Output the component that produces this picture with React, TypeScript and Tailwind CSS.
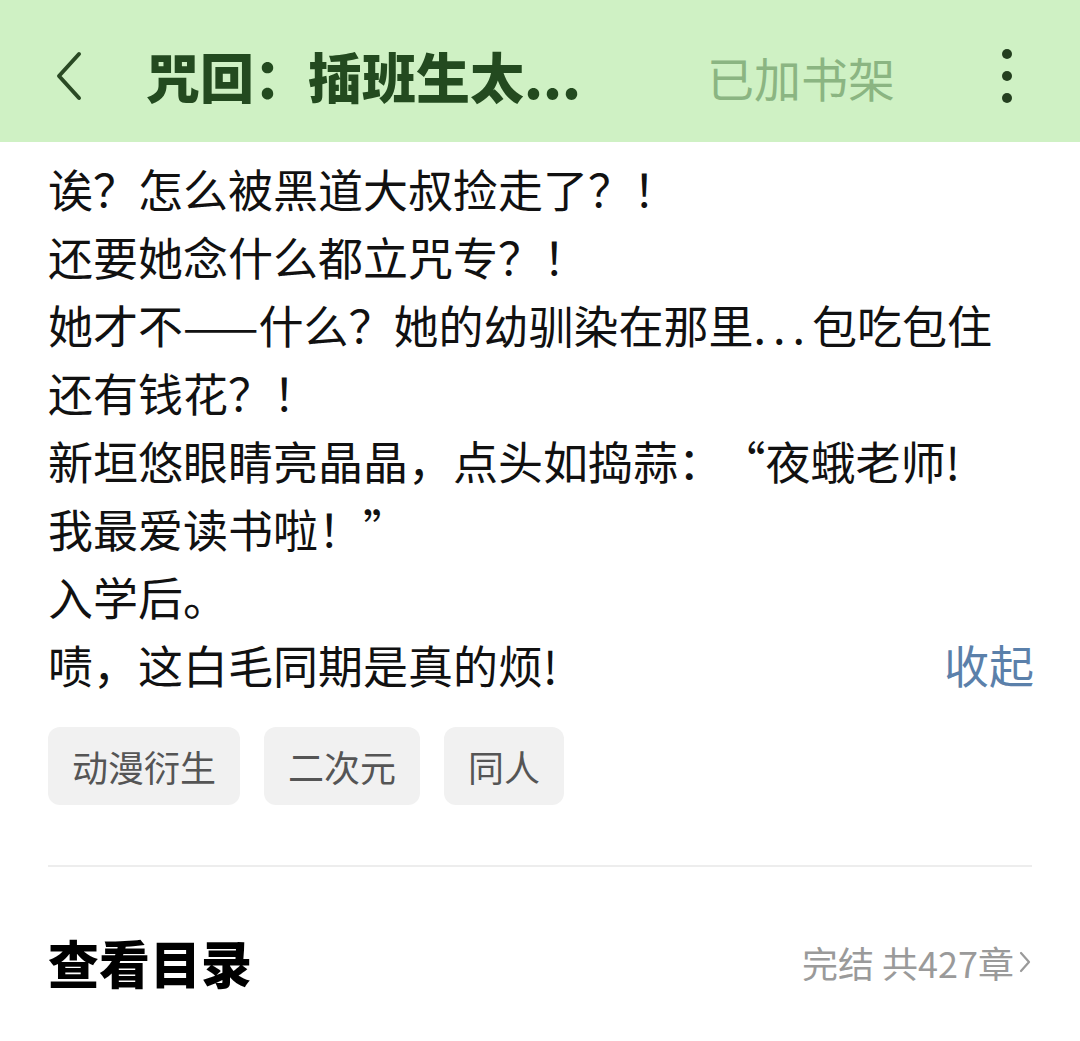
import React from "react";

export default function App() {
  const font = { fontFamily: '"Noto Sans CJK SC", "Noto Sans", sans-serif' };
  return (
    <div className="w-[1080px] h-[1041px] bg-white overflow-hidden" style={font}>
      <div className="h-[142px] bg-[#cff1c4] flex items-center pt-[10px]">
        <div className="w-[146px] flex items-center pl-[56px]">
          <svg width="26" height="50" viewBox="0 0 26 50" fill="none">
            <path d="M23 3 L3 25 L23 47" stroke="#2a4a24" strokeWidth="4" strokeLinecap="round" strokeLinejoin="round" />
          </svg>
        </div>
        <div className="text-[54px] font-black text-[#234a1f] leading-none whitespace-nowrap">咒回：插班生太...</div>
        <div className="flex-1" />
        <div className="text-[47px] text-[#8bb582] leading-none mr-[107px]">已加书架</div>
        <div className="flex flex-col gap-[12px] mr-[68px]">
          <div className="w-[10px] h-[10px] rounded-full bg-[#243f1f]" />
          <div className="w-[10px] h-[10px] rounded-full bg-[#243f1f]" />
          <div className="w-[10px] h-[10px] rounded-full bg-[#243f1f]" />
        </div>
      </div>
      <div className="px-[48px] pt-[13px]">
        <div className="text-[45px] leading-[68px] text-[#111]">
          <div className="whitespace-nowrap">诶？怎么被黑道大叔捡走了？！</div>
          <div className="whitespace-nowrap">还要她念什么都立咒专？！</div>
          <div className="whitespace-nowrap">
            她才不——什么？她的幼驯染在那里<span className="tracking-[7px]">...</span>包吃包住
          </div>
          <div className="whitespace-nowrap">还有钱花？！</div>
          <div className="whitespace-nowrap">
            新垣悠眼睛亮晶晶，点头如捣蒜：<span className="ml-[20px]">“夜蛾老师!</span>
          </div>
          <div className="whitespace-nowrap">我最爱读书啦！”</div>
          <div className="whitespace-nowrap">入学后。</div>
          <div className="flex justify-between">
            <span>啧，这白毛同期是真的烦!</span>
            <span className="text-[#5b80aa] -mr-[2px]">收起</span>
          </div>
        </div>
        <div className="flex gap-[24px] mt-[28px]">
          {["动漫衍生", "二次元", "同人"].map((t) => (
            <div key={t} className="h-[78px] px-[24px] rounded-[12px] bg-[#f1f1f1] flex items-center text-[36px] text-[#555]">
              {t}
            </div>
          ))}
        </div>
        <div className="mt-[60px] h-[2px] bg-[#ededed]" />
        <div className="flex items-center justify-between h-[190px]">
          <div className="text-[51px] font-black text-black leading-none">查看目录</div>
          <div className="flex items-center text-[36px] text-[#9a9a9a] leading-none">
            <span>完结 共427章</span>
            <svg width="14" height="24" viewBox="0 0 14 24" className="ml-[4px]" fill="none">
              <path d="M3 3 L11 12 L3 21" stroke="#9a9a9a" strokeWidth="2.2" strokeLinecap="round" strokeLinejoin="round" />
            </svg>
          </div>
        </div>
      </div>
    </div>
  );
}
